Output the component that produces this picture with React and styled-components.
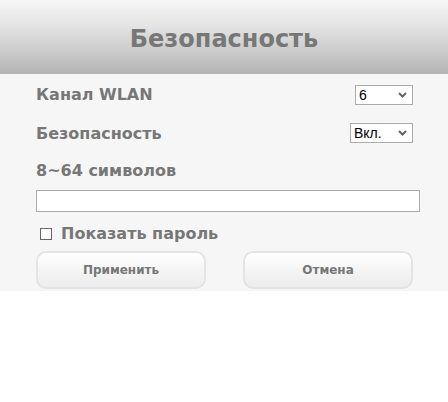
import React from 'react'
import styled, { createGlobalStyle } from 'styled-components'

const Global = createGlobalStyle`
  body {
    margin: 0;
    background: #fff;
    font-family: "DejaVu Sans", Verdana, sans-serif;
  }
`

const Header = styled.div`
  height: 74px;
  display: flex;
  align-items: center;
  justify-content: center;
  background: linear-gradient(to bottom, #f6f6f6 0%, #e4e4e4 35%, #b4b4b4 100%);
`

const Title = styled.h1`
  margin: 0;
  padding-top: 4px;
  font-size: 24px;
  font-weight: bold;
  color: #777;
`

const Panel = styled.div`
  background: #f6f6f6;
  height: 217px;
  padding: 0 35px 0 36px;
  box-sizing: border-box;
  display: flex;
  flex-direction: column;
`

const Row = styled.div`
  display: flex;
  align-items: center;
  justify-content: space-between;
  height: ${p => p.h}px;
`

const Label = styled.span`
  font-size: 16px;
  font-weight: bold;
  color: #777;
`

const Select = styled.select`
  width: ${p => p.w}px;
  height: 20px;
  font-family: "Liberation Sans", Arial, sans-serif;
  font-size: 14px;
  color: #000;
  background: #fff;
  border: 1px solid #aaa;
  border-radius: 0;
  padding: 0 0 0 3px;
  appearance: none;
  background-image: url("data:image/svg+xml;utf8,<svg xmlns='http://www.w3.org/2000/svg' width='9' height='6'><path d='M1 1 L4.5 4.5 L8 1' stroke='%23666' stroke-width='2' fill='none'/></svg>");
  background-repeat: no-repeat;
  background-position: right 5px center;
`

const Input = styled.input`
  display: block;
  width: 384px;
  height: 22px;
  box-sizing: border-box;
  border: 1px solid #aaa;
  background: #fff;
  margin: 1px 0 0;
`

const CheckRow = styled.label`
  display: flex;
  align-items: center;
  gap: 9px;
  height: 39px;
  box-sizing: border-box;
  padding: 4px 0 0 4px;
  font-size: 16px;
  font-weight: bold;
  color: #777;
`

const Box = styled.span`
  width: 10px;
  height: 10px;
  border: 1px solid #666;
  background: #fff;
`

const Buttons = styled.div`
  display: flex;
  justify-content: space-between;
  width: 377px;
`

const Button = styled.button`
  width: 170px;
  height: 38px;
  border: 2px solid #e4e4e4;
  border-radius: 10px;
  background: linear-gradient(to bottom, #ffffff 0%, #f3f3f3 60%, #ececec 100%);
  font-family: "DejaVu Sans", Verdana, sans-serif;
  font-size: 12px;
  font-weight: bold;
  color: #777;
`

export default function App() {
  return (
    <>
      <Global />
      <Header>
        <Title>Безопасность</Title>
      </Header>
      <Panel>
        <Row h={41}>
          <Label>Канал WLAN</Label>
          <Select w={58} defaultValue="6">
            <option>6</option>
          </Select>
        </Row>
        <Row h={36}>
          <Label>Безопасность</Label>
          <Select w={63} defaultValue="Вкл.">
            <option>Вкл.</option>
          </Select>
        </Row>
        <Row h={38}>
          <Label>8~64 символов</Label>
        </Row>
        <Input type="password" />
        <CheckRow>
          <Box />
          Показать пароль
        </CheckRow>
        <Buttons>
          <Button>Применить</Button>
          <Button>Отмена</Button>
        </Buttons>
      </Panel>
    </>
  )
}
